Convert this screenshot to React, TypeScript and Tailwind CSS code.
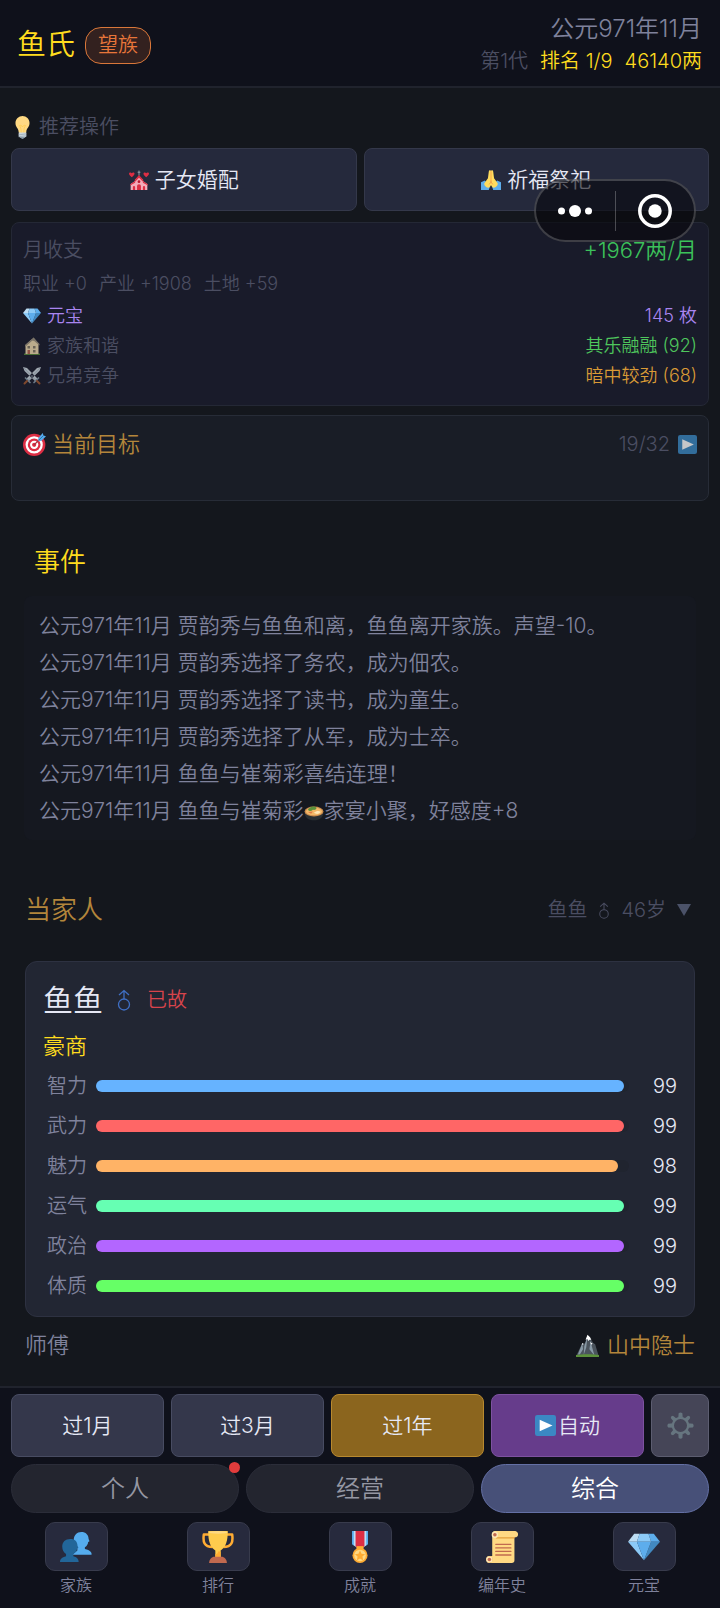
import React from "react";

type IconProps = { className?: string };

function Svg({ className, children }: { className?: string; children: React.ReactNode }) {
  return (
    <svg viewBox="0 0 36 36" aria-hidden="true" className={`shrink-0 ${className ?? ""}`}>
      {children}
    </svg>
  );
}

const Bulb = ({ className }: IconProps) => (
  <Svg className={className}>
    <path fill="#FFD983" d="M29 11.06c0 6.44-5 8.44-5 13.44 0 3.1-3.33 3.5-5.5 3.5-2.06 0-6.59-.78-6.59-3.5 0-5-4.91-7-4.91-13.44C7 5.03 12.1.14 18.08.14 24.07.14 29 5.03 29 11.06z" />
    <path fill="none" stroke="#FFCC4D" strokeWidth="1.2" d="M16 27c0-7-1-10-3-12 2-1 4 0 5 2 1-2 3-3 5-2-2 2-3 5-3 12" />
    <path fill="#CCD6DD" d="M12 26h12v6l-3 2h-6l-3-2z" />
    <path fill="#8899A6" d="M15 33h6c0 1.7-1.3 3-3 3s-3-1.300-3-3z" />
    <path stroke="#99AAB5" strokeWidth="1.2" d="M12 29.500l12-1.500M12 32.500l12-1.500" />
  </Svg>
);

const Wedding = ({ className }: IconProps) => (
  <Svg className={className}>
    <path stroke="#99AAB5" strokeWidth="1.600" d="M18 1v9M15.500 4h5" />
    <path fill="#F4ABBA" d="M3 25l8-5V17l7-5 7 5v3l8 5v11H3z" />
    <path fill="#DD2E44" d="M18 9l8 9-1 3-7-7-7 7-1-3zM2 26l9-6v3l-9 5zM34 26l-9-6v3l9 5z" />
    <path fill="#DD2E44" d="M14.500 36v-7a3.500 3.500 0 0 1 7 0v7zM7 36v-5a2 2 0 0 1 4 0v5zM25 36v-5a2 2 0 0 1 4 0v5z" />
    <circle cx="18" cy="21" r="2.500" fill="#BE1931" />
    <path fill="#DD2E44" d="M5 13C1 10 0 8 0 6.500 0 4 4 3.500 5 6c1-2.500 5-2 5 .500C10 8 9 10 5 13zM31 13c-4-3-5-5-5-6.500 0-2.500 4-3 5-.500 1-2.500 5-2 5 .500C36 8 35 10 31 13z" />
  </Svg>
);

const Pray = ({ className }: IconProps) => (
  <Svg className={className}>
    <path fill="#5DADEC" d="M0 22l7-3 9 11-2 6H0zM36 22l-7-3-9 11 2 6h14z" />
    <path fill="#FFDC5D" d="M17.500 1.500C16.500 0 14.500.500 14 3l-1.500 12L6 24c-1 3 3 8 7 8 2.500 0 4-3 5-5 1 2 2.500 5 5 5 4 0 8-5 7-8l-6.500-9L22 3c-.5-2.500-2.500-3-3.500-1.500z" />
    <path stroke="#EF9645" strokeWidth="1.400" fill="none" d="M18 2v17c0 4-2 6-4 7M18 19c0 4 2 6 4 7" />
  </Svg>
);

const Gem = ({ className }: IconProps) => (
  <Svg className={className}>
    <path fill="#BDDDF4" d="M13 3H7l-7 9h10z" />
    <path fill="#5DADEC" d="M36 12l-7-9h-6l3 9z" />
    <path fill="#4289C1" d="M26 12h10L18 33z" />
    <path fill="#8CCAF7" d="M10 12H0l18 21zm3-9l-3 9h16l-3-9z" />
    <path fill="#5DADEC" d="M18 33l-8-21h16z" />
  </Svg>
);

const House = ({ className }: IconProps) => (
  <Svg className={className}>
    <path fill="#5C913B" d="M2 33h32v3H2z" />
    <path fill="#FFE8B6" d="M5 34V16L17 5l13 9v20z" />
    <path fill="#FFE8B6" d="M21 1l10 13v20H19z" />
    <path fill="#A59A83" d="M21 1l12 13v3L20 6 4 20v-4z" />
    <path fill="#8B8069" d="M9 18h5v5H9zM20 18h5v5h-5zM20 26h5v5h-5z" />
    <path fill="#C1694F" d="M9 26h5v8H9z" />
  </Svg>
);

const Swords = ({ className }: IconProps) => (
  <Svg className={className}>
    <path fill="#CCD6DD" d="M0 0l8 2 21 21-5 5L3 8zM36 0l-8 2L7 23l5 5L33 8z" />
    <path stroke="#99AAB5" strokeWidth="1.200" d="M2 2l23 24M34 2L11 26" />
    <path stroke="#8899A6" strokeWidth="3.500" strokeLinecap="round" d="M22 31l9-9M5 22l9 9" />
    <path stroke="#A0572F" strokeWidth="4" strokeLinecap="round" d="M28 28l5 5M8 28l-5 5" />
  </Svg>
);

const Target = ({ className }: IconProps) => (
  <Svg className={className}>
    <circle cx="17.500" cy="18.500" r="17.500" fill="#DD2E44" />
    <circle cx="17.500" cy="18.500" r="13.500" fill="#fff" />
    <circle cx="17.500" cy="18.500" r="10" fill="#DD2E44" />
    <circle cx="17.500" cy="18.500" r="6.500" fill="#fff" />
    <circle cx="17.500" cy="18.500" r="3.300" fill="#DD2E44" />
    <path stroke="#A83240" strokeWidth="2" d="M17 19L27 9" />
    <path fill="#55ACEE" d="M24 8l7-8 1 4 4 1-7 7-5 1z" />
    <path stroke="#269" strokeWidth="1.200" d="M25 11l7-7" />
  </Svg>
);

const Play = ({ className }: IconProps) => (
  <Svg className={className}>
    <rect width="36" height="36" rx="4" fill="#3B88C3" />
    <path fill="#fff" d="M8 8l22 10L8 28z" />
  </Svg>
);

const Bowl = ({ className }: IconProps) => (
  <Svg className={className}>
    <path fill="#292F33" d="M1 18h34c0 10-7 15-17 15S1 28 1 18z" />
    <ellipse cx="18" cy="17" rx="17" ry="9" fill="#C98B4E" />
    <ellipse cx="18" cy="17" rx="14.500" ry="7" fill="#F4B968" />
    <path fill="#5C913B" d="M7 14c3-5 10-8 15-4 2 3-3 5-6 4-3 3-7 3-9 0z" />
    <path fill="#FFE8B6" d="M18 19c4-3 9-4 12-1-3 4-8 5-12 1z" />
    <path fill="#DD7A45" d="M7 18l9-1-3 4z" />
  </Svg>
);

const Mountain = ({ className }: IconProps) => (
  <Svg className={className}>
    <path fill="#4B545D" d="M1 33L10 14l4 1 4-13 5 6 4 6 3 2 5 17z" />
    <path fill="#8899A6" d="M10 14l1 10-5 8H3zM18 4l-2 17-4 12 1-14zM23 10l2 10 4 14-8-10z" />
    <path fill="#fff" d="M18 1l-3 8 3-1 1 3 2-2 3 0-2-4zM10 14l-1 3 3-1zM22 13l2 4 2-2z" />
    <path fill="#5C913B" d="M0 33c9-2 27-2 36 0v3H0z" />
  </Svg>
);

const Gear = ({ className }: IconProps) => (
  <Svg className={className}>
    <g fill="#66757F">
      <path d="M15.500 1.500Q18-.500 20.500 1.500L21 8h-6zM15.500 34.500Q18 36.500 20.500 34.500L21 28h-6zM1.500 15.500Q-.500 18 1.500 20.500L8 21v-6zM34.500 15.500Q36.500 18 34.500 20.500L28 21v-6z" />
      <path d="M5 8q0-3 3-3l5 4-4 4zM31 8q0-3-3-3l-5 4 4 4zM5 28q0 3 3 3l5-4-4-4zM31 28q0 3-3 3l-5-4 4-4z" />
    </g>
    <circle cx="18" cy="18" r="10.200" fill="#454557" stroke="#66757F" strokeWidth="3" />
  </Svg>
);

const People = ({ className }: IconProps) => (
  <Svg className={className}>
    <path fill="#55ACEE" d="M24 1c-5 0-8.500 3.800-8.500 8.800 0 3.600 1.600 7 4 9v3l-6 5h22c.5-3-1.500-5-7.500-6.500v-2c2.500-1.500 3.500-4 3.700-6l1.500-.8-1-2.500C32 4 29 1 24 1z" />
    <path fill="#269" d="M11.500 9C6 9 2.500 12.500 2.500 17.500c0 4 1.800 6.800 4.300 8.500v2.500C2 30 0 31.500 0 35h21c0-3-1-5-6-6.500V26c3-1.700 4-4 4.200-6.500l1.500-.5-1-2.500C19.500 12 17 9 11.500 9z" />
  </Svg>
);

const Trophy = ({ className }: IconProps) => (
  <Svg className={className}>
    <path fill="none" stroke="#FFAC33" strokeWidth="2.800" strokeLinejoin="round" d="M9 4H2c-1 8 0 14 10 14M27 4h7c1 8 0 14-10 14" />
    <path fill="#FFCC4D" d="M7 0h22c0 11-2 18-8 22v8h-6v-8C9 18 7 11 7 0z" />
    <path fill="#FFAC33" d="M18 23h3v7h-6v-4c2 0 3-1 3-3z" />
    <path fill="#C1694F" d="M14 29h8c3 0 6 3 6 7H8c0-4 3-7 6-7z" />
    <ellipse cx="18" cy="1.500" rx="11" ry="1.500" fill="#FFD983" />
  </Svg>
);

const Medal = ({ className }: IconProps) => (
  <Svg className={className}>
    <path fill="#55ACEE" d="M9 0h18v15l-9 6-9-6z" />
    <path fill="#BDDDF4" d="M11 0h3v18l-3-2zM22 0h3v16l-3 2z" />
    <path fill="#DD2E44" d="M13 0h10v17.500L18 21l-5-3.500z" />
    <path fill="#FFAC33" d="M14 17h8v4h-8z" />
    <circle cx="18" cy="27.500" r="8.500" fill="#FFAC33" />
    <circle cx="18" cy="27.500" r="6.500" fill="#FFD983" />
    <path fill="#FFAC33" d="M18 22l1.700 3.600 4 .5-3 2.700.8 4-3.500-2-3.500 2 .8-4-3-2.700 4-.5z" />
  </Svg>
);

const Scroll = ({ className }: IconProps) => (
  <Svg className={className}>
    <path fill="#FFD983" d="M10 0h23c4 1 4 6 1 7h-2v26c0 2-1 3-3 3H4c-5 0-5-8 0-8h3V4c0-2 1-4 3-4z" />
    <path fill="#E39F3D" d="M12 7h21c-1 1.500-2 1.500-4 1.500H11zM4 28c4 0 5 6 1 8H3c-4-2-3-8 1-8z" />
    <circle cx="10" cy="4.200" r="3.600" fill="#FFE8B6" />
    <circle cx="10" cy="4.200" r="2" fill="#C1694F" />
    <circle cx="3.800" cy="32" r="3.600" fill="#FFE8B6" />
    <circle cx="3.800" cy="32" r="2" fill="#C1694F" />
    <path stroke="#C1694F" strokeWidth="1.500" strokeLinecap="round" d="M11 15h17M11 19h17M11 23h17M11 27h17" />
  </Svg>
);

const Male = ({ className }: IconProps) => (
  <svg viewBox="0 0 14 22" role="img" aria-label="男" className={`shrink-0 ${className ?? ""}`} fill="none" stroke="currentColor" strokeWidth="1.300">
    <circle cx="7" cy="15.500" r="5.500" />
    <path d="M7 10V1.500M2 6l5-4.500L12 6" />
  </svg>
);

const events: React.ReactNode[] = [
  "贾韵秀与鱼鱼和离，鱼鱼离开家族。声望-10。",
  "贾韵秀选择了务农，成为佃农。",
  "贾韵秀选择了读书，成为童生。",
  "贾韵秀选择了从军，成为士卒。",
  "鱼鱼与崔菊彩喜结连理！",
  <>
    鱼鱼与崔菊彩
    <Bowl className="inline-block size-5 align-[-4px]" />
    家宴小聚，好感度+8
  </>,
];

const stats = [
  { name: "智力", value: 99, color: "bg-[#66b3ff]" },
  { name: "武力", value: 99, color: "bg-[#ff6666]" },
  { name: "魅力", value: 98, color: "bg-[#ffb366]" },
  { name: "运气", value: 99, color: "bg-[#66ffb3]" },
  { name: "政治", value: 99, color: "bg-[#b366ff]" },
  { name: "体质", value: 99, color: "bg-[#66ff66]" },
];

const nav = [
  { name: "家族", Icon: People },
  { name: "排行", Icon: Trophy },
  { name: "成就", Icon: Medal },
  { name: "编年史", Icon: Scroll },
  { name: "元宝", Icon: Gem },
];

const actionButton =
  "flex h-[63px] min-w-0 flex-1 items-center justify-center rounded-lg border text-[21px]";

export default function App() {
  return (
    <div className="relative flex min-h-screen flex-col bg-[#14171d] font-[Inter,'Noto_Sans_CJK_SC',sans-serif] font-[350] text-[#e6e8f5]">
      <header className="flex h-[88px] items-center justify-between border-b-2 border-[#20232d] bg-[#0f111b] pt-1 pr-[18px] pl-[17px]">
        <div className="flex items-center gap-[10px]">
          <h1 className="text-[29px] leading-9 text-[#ffdc1e]">鱼氏</h1>
          <span className="rounded-2xl border border-[#d9773a] bg-[#33211f] px-3 text-[20px] leading-[35px] text-[#e8763a]">望族</span>
        </div>
        <div className="text-right">
          <p className="text-[24px] leading-8 text-[#7f829c]">公元971年11月</p>
          <p className="flex justify-end gap-3 text-[20px] leading-8 text-[#ffdc1e]">
            <span className="text-[#4b4e62]">第1代</span>
            <span>排名 1/9</span>
            <span>46140两</span>
          </p>
        </div>
      </header>

      <main className="flex-1 px-[11px] pt-6">
        <h2 className="flex items-center gap-[5px] text-[20px] leading-[30px] text-[#4b4e62]">
          <Bulb className="size-[23px]" />
          推荐操作
        </h2>
        <div className="mt-[6px] flex gap-[7px]">
          <button className={`${actionButton} gap-[6px] border-[#34384a] bg-[#25293c]`}>
            <Wedding className="size-5" />
            子女婚配
          </button>
          <button className={`${actionButton} gap-[6px] border-[#34384a] bg-[#25293c]`}>
            <Pray className="size-5" />
            祈福祭祀
          </button>
        </div>

        <section className="mt-[11px] rounded-lg border border-[#242835] bg-[#191b2a] px-[11px] pt-[10px] pb-[14px] text-[18px] leading-[30px] text-[#4b4e62]">
          <div className="flex items-center justify-between text-[20px] leading-[34px]">
            <span>月收支</span>
            <span className="text-[22px] text-[#3cc25a]">+1967两/月</span>
          </div>
          <div className="flex gap-3 leading-[34px]">
            <span>职业 +0</span>
            <span>产业 +1908</span>
            <span>土地 +59</span>
          </div>
          <div className="flex items-center justify-between text-[#a985f0]">
            <span className="flex items-center gap-[6px]">
              <Gem className="size-[18px]" />
              元宝
            </span>
            <span>145 枚</span>
          </div>
          <div className="flex items-center justify-between">
            <span className="flex items-center gap-[6px]">
              <House className="size-[18px] opacity-70" />
              家族和谐
            </span>
            <span className="text-[#4fc75d]">其乐融融 (92)</span>
          </div>
          <div className="flex items-center justify-between">
            <span className="flex items-center gap-[6px]">
              <Swords className="size-[18px] opacity-75" />
              兄弟竞争
            </span>
            <span className="text-[#d99a36]">暗中较劲 (68)</span>
          </div>
        </section>

        <section className="mt-[9px] min-h-[86px] rounded-lg border border-[#272c37] bg-[#191d26] px-[11px] pt-3">
          <div className="flex items-center justify-between">
            <h2 className="flex items-center gap-[6px] text-[22px] leading-8 text-[#b3863b]">
              <Target className="size-[23px]" />
              当前目标
            </h2>
            <button aria-label="展开目标" className="flex items-center gap-2 text-[20px] text-[#4b4e62]">
              19/32
              <Play className="size-[19px] opacity-75" />
            </button>
          </div>
        </section>

        <section className="px-[13px] pt-[41px]">
          <h2 className="pl-[10px] text-[26px] leading-10 text-[#ffdc1e]">事件</h2>
          <ul className="mt-[14px] rounded-lg bg-[#151820] px-[15px] py-[11px] text-[21px] leading-[37px] text-[#7f829c]">
            {events.map((text, i) => (
              <li key={i}>公元971年11月 {text}</li>
            ))}
          </ul>
        </section>

        <section className="px-[14px] pt-[50px]">
          <div className="flex items-center justify-between">
            <h2 className="text-[26px] leading-10 text-[#b3863b]">当家人</h2>
            <button className="flex items-center gap-[11px] pr-1 text-[20px] text-[#4b4e62]">
              鱼鱼
              <Male className="h-[17px] w-3" />
              46岁
              <svg viewBox="0 0 14 12" aria-hidden="true" className="h-3 w-[14px] fill-[#4b5268]">
                <path d="M0 0h14L7 12z" />
              </svg>
            </button>
          </div>

          <article className="mt-[31px] rounded-xl border border-[#2d3141] bg-[#222633] px-[17px] pt-5 pb-[10px]">
            <div className="flex items-center text-[20px] leading-9">
              <h3 className="text-[30px]">鱼鱼</h3>
              <Male className="ml-[14px] h-[22px] w-[14px] text-[#3f6fc4]" />
              <span className="ml-4 text-[#d8444c]">已故</span>
            </div>
            <p className="mt-3 text-[22px] leading-8 text-[#ffdc1e]">豪商</p>
            <dl className="mt-1">
              {stats.map((s) => (
                <div key={s.name} className="flex h-10 items-center gap-[9px] text-[20px]">
                  <dt className="w-11 text-right text-[#7f829c]">{s.name}</dt>
                  <dd className="flex flex-1 items-center">
                    <span className="h-3 flex-1 rounded-full bg-[#20242f]">
                      <span className={`block h-3 rounded-full ${s.color}`} style={{ width: `${s.value}%` }} />
                    </span>
                    <span className="w-12 text-right">{s.value}</span>
                  </dd>
                </div>
              ))}
            </dl>
          </article>

          <div className="flex items-center justify-between pt-3 text-[22px] leading-8">
            <span className="text-[#7f829c]">师傅</span>
            <span className="flex items-center gap-2 text-[#b3863b]">
              <Mountain className="size-[23px]" />
              山中隐士
            </span>
          </div>
        </section>
      </main>

      <footer className="sticky bottom-0 border-t-2 border-[#20232d] bg-[#0f111b] px-[11px] pt-[6px] pb-[10px]">
        <div className="flex gap-[7px]">
          <button className={`${actionButton} border-[#484c62] bg-[#34374b]`}>过1月</button>
          <button className={`${actionButton} border-[#484c62] bg-[#34374b]`}>过3月</button>
          <button className={`${actionButton} border-[#b8892f] bg-[#8b651e]`}>过1年</button>
          <button className={`${actionButton} gap-[2px] border-[#7d52a0] bg-[#663c8b] text-[20px]`}>
            <Play className="size-[21px]" />
            自动
          </button>
          <button aria-label="设置" className="flex h-[63px] w-[58px] shrink-0 items-center justify-center rounded-lg border border-[#5c5d70] bg-[#454557]">
            <Gear className="size-[27px]" />
          </button>
        </div>
        <div role="tablist" className="mt-[7px] flex gap-[7px] text-[24px]">
          <button role="tab" aria-selected="false" className="relative h-[49px] flex-1 rounded-full border border-[#2b2d39] bg-[#23252f] text-[#9597a3]">
            个人
            <span className="absolute -top-[3px] -right-[2px] size-[11px] rounded-full bg-[#e23c3c]" />
          </button>
          <button role="tab" aria-selected="false" className="h-[49px] flex-1 rounded-full border border-[#2b2d39] bg-[#23252f] text-[#9597a3]">经营</button>
          <button role="tab" aria-selected="true" className="h-[49px] flex-1 rounded-full border border-[#6470a5] bg-[#475078] text-white">综合</button>
        </div>
        <nav className="-mx-[6px] mt-[9px] grid grid-cols-5">
          {nav.map(({ name, Icon }) => (
            <button key={name} className="flex flex-col items-center gap-px text-[16px] leading-[26px] text-[#7f829c]">
              <span className="flex h-[49px] w-[63px] items-center justify-center rounded-[10px] border border-[#383b4c] bg-[#272a3d]">
                <Icon className="size-8" />
              </span>
              {name}
            </button>
          ))}
        </nav>
      </footer>

      <div className="absolute top-[179px] right-6 flex h-[63px] w-[162px] items-center rounded-full border-2 border-white/20 bg-[#06070b]/60">
        <button aria-label="更多" className="flex h-full flex-1 items-center justify-center">
          <svg viewBox="0 0 36 14" className="h-[14px] w-9 fill-white">
            <circle cx="4.500" cy="7" r="3.500" />
            <circle cx="18" cy="7" r="6" />
            <circle cx="31.500" cy="7" r="3.500" />
          </svg>
        </button>
        <span className="h-10 w-px bg-white/25" />
        <button aria-label="关闭" className="flex h-full flex-1 items-center justify-center">
          <svg viewBox="0 0 34 34" className="size-[34px]">
            <circle cx="17" cy="17" r="15.200" fill="none" stroke="#fff" strokeWidth="3.500" />
            <circle cx="17" cy="17" r="6.700" fill="#fff" />
          </svg>
        </button>
      </div>
    </div>
  );
}
